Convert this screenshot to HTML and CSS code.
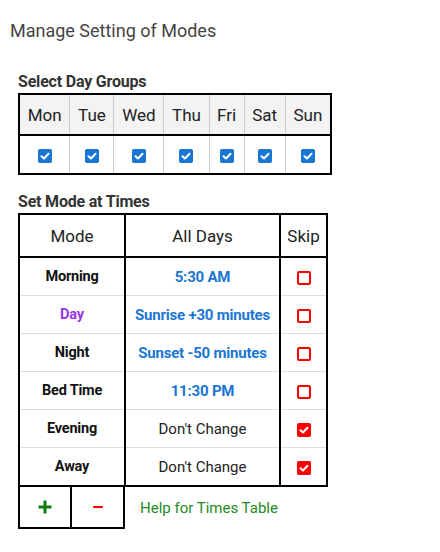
FILE: index.html
```html
<!DOCTYPE html>
<html lang="en">
<head>
  <meta charset="UTF-8">
  <meta name="viewport" content="width=device-width, initial-scale=1.0">
  <title>Manage Setting of Modes</title>
  <link rel="stylesheet" href="styles.css">
</head>
<body>
  <div class="page-title">Manage Setting of Modes</div>

  <div class="section">
    <div class="section-title">Select Day Groups</div>
    <table class="days">
      <tr>
        <th>Mon</th><th>Tue</th><th>Wed</th><th>Thu</th><th>Fri</th><th>Sat</th><th>Sun</th>
      </tr>
      <tr>
        <td><span class="check on"><svg viewBox="0 0 14 14"><path d="M3.5 7.2 L6 9.5 L10.5 4.8"/></svg></span></td>
        <td><span class="check on"><svg viewBox="0 0 14 14"><path d="M3.5 7.2 L6 9.5 L10.5 4.8"/></svg></span></td>
        <td><span class="check on"><svg viewBox="0 0 14 14"><path d="M3.5 7.2 L6 9.5 L10.5 4.8"/></svg></span></td>
        <td><span class="check on"><svg viewBox="0 0 14 14"><path d="M3.5 7.2 L6 9.5 L10.5 4.8"/></svg></span></td>
        <td><span class="check on"><svg viewBox="0 0 14 14"><path d="M3.5 7.2 L6 9.5 L10.5 4.8"/></svg></span></td>
        <td><span class="check on"><svg viewBox="0 0 14 14"><path d="M3.5 7.2 L6 9.5 L10.5 4.8"/></svg></span></td>
        <td><span class="check on"><svg viewBox="0 0 14 14"><path d="M3.5 7.2 L6 9.5 L10.5 4.8"/></svg></span></td>
      </tr>
    </table>
  </div>

  <div class="section times-section">
    <div class="section-title">Set Mode at Times</div>
    <table class="times">
      <colgroup>
        <col class="col-mode">
        <col class="col-time">
        <col class="col-skip">
      </colgroup>
      <tr>
        <th>Mode</th><th>All Days</th><th>Skip</th>
      </tr>
      <tr>
        <td class="mode">Morning</td>
        <td class="time set">5:30 AM</td>
        <td><span class="check skip"></span></td>
      </tr>
      <tr>
        <td class="mode current">Day</td>
        <td class="time set">Sunrise +30 minutes</td>
        <td><span class="check skip"></span></td>
      </tr>
      <tr>
        <td class="mode">Night</td>
        <td class="time set">Sunset -50 minutes</td>
        <td><span class="check skip"></span></td>
      </tr>
      <tr>
        <td class="mode">Bed Time</td>
        <td class="time set">11:30 PM</td>
        <td><span class="check skip"></span></td>
      </tr>
      <tr>
        <td class="mode">Evening</td>
        <td class="time">Don't Change</td>
        <td><span class="check skip on"><svg viewBox="0 0 14 14"><path d="M3.5 7.2 L6 9.5 L10.5 4.8"/></svg></span></td>
      </tr>
      <tr>
        <td class="mode">Away</td>
        <td class="time">Don't Change</td>
        <td><span class="check skip on"><svg viewBox="0 0 14 14"><path d="M3.5 7.2 L6 9.5 L10.5 4.8"/></svg></span></td>
      </tr>
    </table>

    <div class="actions">
      <button class="btn add" title="Add mode">
        <svg viewBox="0 0 16 16"><path d="M8 1.5 V14.5 M1.5 8 H14.5"/></svg>
      </button>
      <button class="btn remove" title="Remove mode">
        <svg viewBox="0 0 16 16"><path d="M2.5 8 H13.5"/></svg>
      </button>
      <a class="help" href="#">Help for Times Table</a>
    </div>
  </div>
</body>
</html>
```

FILE: styles.css
```css
body {
  margin: 0;
  padding: 20px 0 0 10px;
  font-family: Roboto, "Liberation Sans", sans-serif;
  background: #fff;
  color: #222;
}
.page-title {
  font-size: 18px;
  line-height: 21px;
  color: #444;
}
.section {
  margin-top: 31px;
  padding-left: 8px;
}
.times-section {
  margin-top: 17px;
}
.section-title {
  font-size: 16px;
  line-height: 19px;
  font-weight: 700;
  color: #333;
  letter-spacing: -0.2px;
  margin-bottom: 2px;
}
table {
  border-collapse: collapse;
  border: 2px solid #000;
}
th {
  font-size: 17px;
  font-weight: 400;
  color: #222;
  padding: 0;
}

/* day groups */
.days {
  width: 314px;
}
.days th {
  height: 39px;
  padding: 0 7px;
  background: #f3f3f3;
  border-left: 1px solid #ccc;
  border-bottom: 2px solid #000;
}
.days td {
  height: 37px;
  padding: 0;
  text-align: center;
  border-left: 1px solid #ccc;
}
.days th:first-child,
.days td:first-child {
  border-left: none;
}

/* checkboxes */
.check {
  display: inline-block;
  box-sizing: border-box;
  width: 14px;
  height: 14px;
  border-radius: 2px;
  vertical-align: middle;
}
.check svg {
  display: block;
  width: 14px;
  height: 14px;
}
.check path {
  fill: none;
  stroke: #fff;
  stroke-width: 2;
  stroke-linecap: round;
  stroke-linejoin: round;
}
.check.on {
  background: #1976d2;
}
.check.skip {
  border: 2px solid #f00;
}
.check.skip.on {
  background: #f00;
  border: none;
}

/* mode times */
.times {
  table-layout: fixed;
  width: 308px;
}
.col-mode { width: 106px; }
.col-time { width: 155px; }
.col-skip { width: 47px; }
.times th {
  height: 41px;
  border-left: 2px solid #000;
  border-bottom: 2px solid #000;
}
.times td {
  height: 37px;
  padding: 0;
  text-align: center;
  font-size: 15px;
  border-left: 2px solid #000;
  border-top: 1px solid #ddd;
}
.times tr:nth-child(2) td {
  border-top: none;
}
.times th:first-child,
.times td:first-child {
  border-left: none;
}
.times .mode {
  font-weight: 700;
  font-size: 14.5px;
  color: #111;
  letter-spacing: -0.2px;
}
.times .mode.current {
  color: #9933ee;
}
.times .time {
  color: #222;
}
.times .time.set {
  font-weight: 700;
  font-size: 15px;
  color: #1976d2;
  letter-spacing: -0.2px;
}

/* add / remove row */
.actions {
  display: flex;
  align-items: center;
}
.btn {
  box-sizing: border-box;
  width: 54px;
  height: 42px;
  margin: 0;
  padding: 0;
  background: #fff;
  border: 2px solid #000;
  border-top: none;
  display: flex;
  align-items: center;
  justify-content: center;
  cursor: pointer;
}
.btn + .btn {
  width: 53px;
  border-left: none;
}
.btn svg {
  width: 16px;
  height: 16px;
}
.btn path {
  fill: none;
  stroke-width: 3;
}
.add path {
  stroke: #0b7d0b;
}
.remove svg {
  width: 14px;
  margin-top: -1px;
}
.remove path {
  stroke: #f00;
  stroke-width: 2.4;
}
.help {
  margin-left: 15px;
  font-size: 15px;
  color: #228b22;
  text-decoration: none;
}
```
